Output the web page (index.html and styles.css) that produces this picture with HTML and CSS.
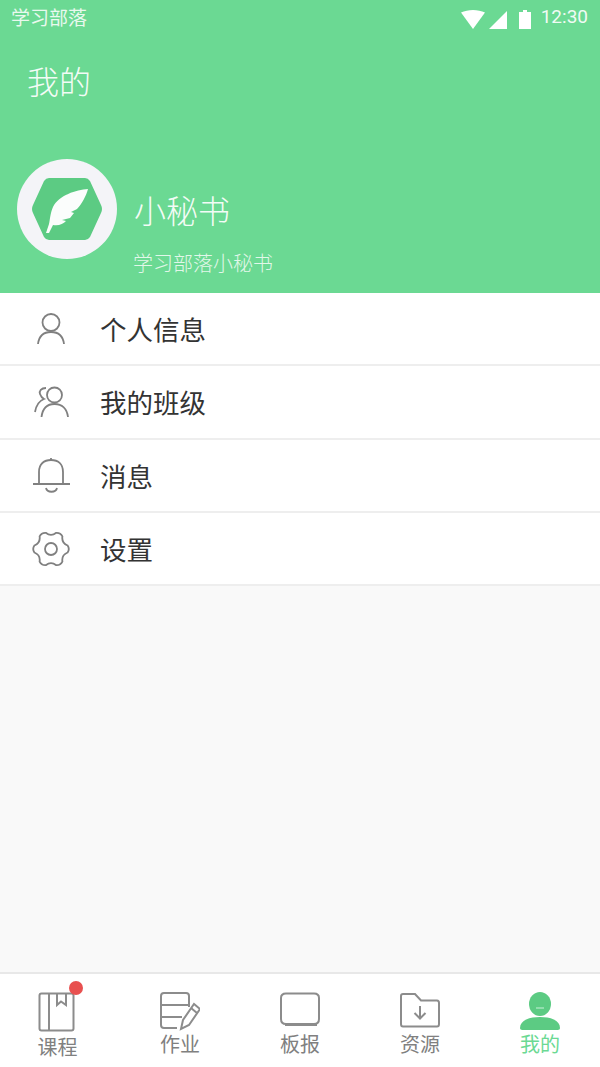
FILE: index.html
```html
<!doctype html>
<html lang="zh">
	<head>
		<meta charset="utf-8">
		<title>我的</title>
		<link rel="stylesheet" href="styles.css">
	</head>
	<body>
		<div class="header">
			<div class="statusBar">
				<span class="appName">学习部落</span>
				<svg class="statusIcons" width="70" height="24" viewBox="0 0 70 24">
					<path d="M0 7.500C7 4 17 4 24 7.500L12 24z" fill="#fff"/>
					<path d="M46 6V24H28z" fill="#fff"/>
					<path d="M58 7h4V5h4v2h4V24H58z" fill="#fff"/>
				</svg>
				<span class="clock">12:30</span>
			</div>
			<div class="pageTitle">我的</div>
			<div class="profile">
				<div class="avatar">
					<svg width="72" height="64" viewBox="0 0 72 64">
						<path d="M18 1H54Q57 1 59 4L70 28Q72 32 70 36L59 60Q57 63 54 63H18Q15 63 13 60L2 36Q0 32 2 28L13 4Q15 1 18 1z" fill="#5ccb83"/>
						<path d="M57 12C45 13 28 18 22 30C19 37 19 43 18 47L15 56L18 56L22 48C28 49 32 47 35 44L31 43L39 41L43 36L40 35L46 32C51 27 55 19 57 12z" fill="#fbfdfc"/>
					</svg>
				</div>
				<div class="info">
					<div class="name">小秘书</div>
					<div class="desc">学习部落小秘书</div>
				</div>
			</div>
		</div>

		<ul class="menu">
			<li>
				<svg class="menuIcon" width="40" height="40" viewBox="0 0 40 40">
					<circle cx="20" cy="13.500" r="8.500"/>
					<path d="M7 35C8 27 13 23 20 23S32 27 33 35"/>
				</svg>
				个人信息
			</li>
			<li>
				<svg class="menuIcon" width="40" height="40" viewBox="0 0 40 40">
					<circle cx="23.500" cy="13" r="7.500"/>
					<path d="M10.500 35C11.500 27 16 22 23.500 22S36 27 37 35"/>
					<path d="M15 6C10 6 8 9 9 12C10 15 11 16 13 17C8 19 5 24 4 30"/>
				</svg>
				我的班级
			</li>
			<li>
				<svg class="menuIcon" width="40" height="40" viewBox="0 0 40 40">
					<path d="M8 29V17C8 9 13 5 20 5S32 9 32 17V29"/>
					<path d="M2 29H39"/>
					<path d="M15 33C16 38 25 38 26 33"/>
					<path d="M20 3V5"/>
				</svg>
				消息
			</li>
			<li>
				<svg class="menuIcon" width="40" height="40" viewBox="0 0 40 40">
					<path d="M36.600 16.500Q39 20 36.600 23.500Q30.400 26 31.400 32.600Q29.500 36.500 25.250 36.200Q20 32 14.750 36.200Q10.500 36.500 8.600 32.600Q9.600 26 3.400 23.500Q1 20 3.400 16.500Q9.600 14 8.600 7.400Q10.500 3.500 14.750 3.800Q20 8 25.250 3.800Q29.500 3.500 31.400 7.400Q30.400 14 36.600 16.500z"/>
					<circle cx="20" cy="20" r="6"/>
				</svg>
				设置
			</li>
		</ul>

		<div class="spacer"></div>

		<div class="nav">
			<div class="navItem first">
				<span class="badge"></span>
				<svg width="40" height="40" viewBox="0 0 40 40">
					<rect x="1.500" y="1.500" width="34" height="37" rx="2"/>
					<path d="M11 1.500V38.500"/>
					<path d="M19 1.500V13L23 9.500L28 13V1.500"/>
				</svg>
				<span>课程</span>
			</div>
			<div class="navItem">
				<svg width="40" height="40" viewBox="0 0 40 40">
					<path d="M29 15V4Q29 1 26 1H4Q1 1 1 4V33Q1 36 4 36H17"/>
					<path d="M1 13H29"/>
					<path d="M1 25H22"/>
					<path d="M21 37L23 28L34 12L40 17L29 33z"/>
					<path d="M31 16L37 21"/>
				</svg>
				<span>作业</span>
			</div>
			<div class="navItem">
				<svg width="40" height="40" viewBox="0 0 40 40">
					<path d="M6 1.500H34Q39 1.500 39 6V27Q39 32 34 32H6Q1 32 1 27V6Q1 1.500 6 1.500z"/>
					<path d="M5 33H37"/>
				</svg>
				<span>板报</span>
			</div>
			<div class="navItem">
				<svg width="40" height="40" viewBox="0 0 40 40">
					<path d="M3 2H15L21 8.500H37Q39 8.500 39 11V32Q39 34.500 37 34.500H3Q1 34.500 1 32V4Q1 2 3 2z"/>
					<path d="M20 14V26"/>
					<path d="M14.500 21L20 26.500L25.500 21"/>
				</svg>
				<span>资源</span>
			</div>
			<div class="navItem active">
				<svg width="42" height="40" viewBox="0 0 42 40">
					<ellipse cx="21" cy="12" rx="11" ry="12" fill="#5ccb83"/>
					<path d="M1 36C1 28 11 25 21 25S41 28 41 36C41 38 39 38 37 38H5C3 38 1 38 1 36z" fill="#5ccb83"/>
					<path d="M17 16H25" stroke="#a5e4bc" stroke-width="1.500"/>
				</svg>
				<span>我的</span>
			</div>
		</div>
	</body>
</html>
```

FILE: styles.css
```css
html, body {
	margin: 0;
	padding: 0;
	height: 100%;
	font-family: "Noto Sans CJK SC", Roboto, sans-serif;
}

body {
	display: flex;
	flex-direction: column;
	background-color: #f9f9f9;
}

.header {
	height: 293px;
	background-color: #6bd993;
	color: #fff;
}

.statusBar {
	display: flex;
	align-items: center;
	height: 34px;
	padding: 0 12px 0 11px;
}

.appName {
	flex: 1;
	font-size: 19px;
	line-height: 34px;
	opacity: 0.85;
}

.statusIcons { margin-right: 10px; }

.clock {
	font-family: Roboto, sans-serif;
	font-size: 19px;
	line-height: 34px;
	opacity: 0.9;
}

.pageTitle {
	margin: 26px 0 0 27px;
	font-size: 32px;
	font-weight: 300;
	line-height: 40px;
	opacity: 0.92;
}

.profile {
	display: flex;
	margin: 59px 0 0 17px;
}

.avatar {
	display: flex;
	align-items: center;
	justify-content: center;
	width: 100px;
	height: 100px;
	border-radius: 50%;
	background-color: #f4f4f8;
}

.info {
	margin-left: 17px;
	padding-top: 30px;
}

.name {
	font-size: 32px;
	font-weight: 300;
	line-height: 40px;
	opacity: 0.92;
}

.desc {
	margin-top: 24px;
	margin-left: -1px;
	font-size: 20px;
	font-weight: 300;
	line-height: 20px;
	opacity: 0.8;
}

.menu {
	list-style: none;
	margin: 0;
	padding: 0;
	background-color: #fff;
}

.menu li {
	display: flex;
	align-items: center;
	height: 71.300px;
	padding-left: 31px;
	border-bottom: 2px solid #eee;
	font-size: 26.500px;
	color: #333;
}

.menuIcon {
	margin-right: 29px;
}

.menu svg {
	fill: none;
	stroke: #808080;
	stroke-width: 1.800;
}

.spacer { flex: 1; }

.nav {
	display: grid;
	grid-template-columns: repeat(5, 1fr);
	height: 93px;
	border-top: 2px solid #e8e8e8;
	background-color: #fff;
}

.navItem {
	position: relative;
	display: flex;
	flex-direction: column;
	align-items: center;
	padding-top: 18px;
	font-size: 20px;
	line-height: 24px;
	color: #808080;
}

.navItem svg {
	fill: none;
	stroke: #8c8c8c;
	stroke-width: 2;
}

.navItem.first {
	padding-right: 5px;
}

.navItem.first span:last-child {
	margin-top: 3px;
}

.navItem.active { color: #6bd993; }

.navItem.active svg { stroke: none; }

.navItem.active svg path:last-child { stroke: #a5e4bc; }

.badge {
	position: absolute;
	top: 7px;
	left: 69px;
	width: 14px;
	height: 14px;
	border-radius: 50%;
	background-color: #e8504f;
}
```
